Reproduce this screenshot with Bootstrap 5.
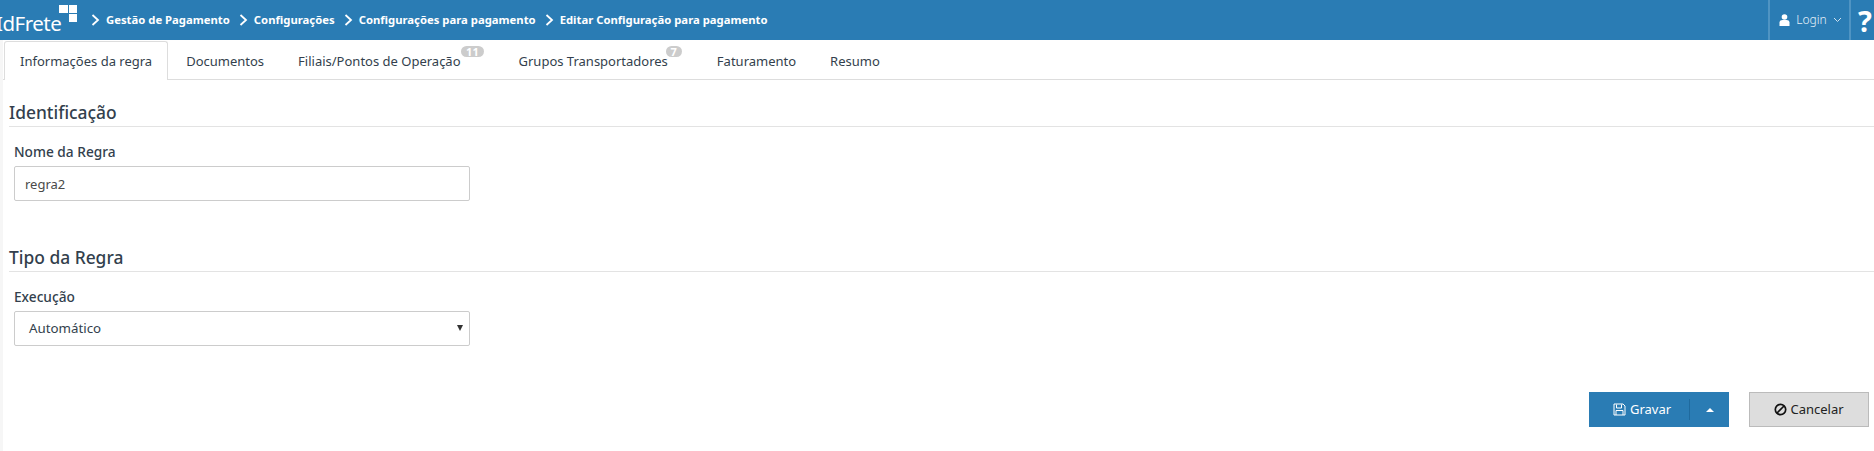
<!DOCTYPE html>
<html lang="pt-BR"><head><meta charset="utf-8"><title>Editar Configuração</title>
<link href="https://cdn.jsdelivr.net/npm/bootstrap@5.3.0/dist/css/bootstrap.min.css" rel="stylesheet">
<style>
html,body{height:451px;overflow:hidden;background:#fff}
body{font-family:"Noto Sans","Open Sans",sans-serif;font-size:13px;color:#333f4d}
.topbar{height:40px;background:#2a7cb4;color:#fff}
.brand{width:81px;height:40px;overflow:hidden;flex:none;position:relative}
.brand-word{font-size:20.5px;line-height:1;letter-spacing:-.5px;margin-left:-4px;margin-top:13px;white-space:nowrap}
.brand-mark{position:absolute;left:59px;top:5px}
.crumbs{font-size:11.3px;font-weight:700;padding-left:10px}
.crumbs svg{margin:0 6px 0 0}
.crumbs span{margin-right:9px}
.topcell{height:40px;border-left:2px solid #4f94c3}
.login{width:81px;font-size:12px;font-weight:300;color:#e6f1f9;padding-left:2px;gap:6px}
.helpcell{width:25px;font-size:29px;font-weight:700;line-height:1;padding-left:7px}
.workarea{border-left:3px solid #f6f6f6;height:411px}
.tabstrip{height:40px;padding:1px 0 0 1px;border-bottom:1px solid #ddd;flex-wrap:nowrap}
.tabstrip .nav-link{height:39px;padding:0 17px;color:#333f4d;font-size:13px;border:0;border-radius:3px 3px 0 0;position:relative;line-height:40px;white-space:nowrap}
.tabstrip .nav-link.active{border:1px solid #ddd;border-bottom:0;height:39px;background:#fff;line-height:39px;padding:0 15px;box-shadow:0 1px 0 #fff}
.tab-docs .nav-link{padding-left:18px}
.tab-fil .nav-link{padding-right:41px}
.tab-gru .nav-link{padding-right:32px}
.tab-count{position:absolute;top:5px;height:11px;padding:0 5px;border-radius:8px;background:#ccc;color:#fff;font-size:11px;line-height:11px;font-weight:700}
.tc1{left:180px}.tc2{left:164px}
.pane{padding:0 0 0 6px}
.sect{font-size:17.4px;font-weight:500;line-height:26px;margin:0;padding-bottom:1px;border-bottom:1px solid #e3e3e3;height:28px}
.sect1{margin-top:19px}.sect2{margin-top:43px}
.field{margin:16px 0 0 5px;width:456px}
.field .form-label{font-size:13.7px;font-weight:500;line-height:18px;margin-bottom:5px;display:block}
.field .form-control{height:35px;border:1px solid #ccc;border-radius:2px;font-size:13px;color:#4a4a4a;padding:0 10px}
.selectbox{height:35px;border:1px solid #ccc;border-radius:2px;padding:0 6px 0 14px;font-size:13.3px}
.caret{width:0;height:0;border:3.5px solid transparent;border-top:6px solid #333;border-bottom:0;margin-top:-2px}
.actions{position:absolute;top:392px;right:5px;gap:20px}
.btn-save{width:140px;height:35px;background:#2a7cb4;color:#fff;border:0;border-radius:0;font-size:13px;padding:0}
.save-main{width:100px;gap:4px;padding-left:6px}
.save-sep{width:1px;height:21px;background:#1f6a9e}
.btn-cancel{width:120px;height:35px;background:#ddd;border:1px solid #bbb;border-radius:0;color:#222;font-size:13px;padding:0;gap:3px}
.btn-save:hover{background:#2a7cb4;color:#fff}
</style></head><body>
<header class="topbar d-flex align-items-stretch">
  <div class="brand"><div class="brand-word">IdFrete</div>
    <svg class="brand-mark" width="18" height="17" viewBox="0 0 18 17"><rect x="0" y="0" width="9" height="8" fill="#fff"/><rect x="10" y="0" width="8" height="8" fill="#fff"/><rect x="10" y="9" width="8" height="8" fill="#fff"/></svg>
  </div>
  <nav class="crumbs d-flex align-items-center flex-grow-1">
    <svg width="9" height="12" viewBox="0 0 9 12"><path d="M1.5 1l5.5 5-5.5 5" fill="none" stroke="#fff" stroke-width="1.8"/></svg><span>Gestão de Pagamento</span>
    <svg width="9" height="12" viewBox="0 0 9 12"><path d="M1.5 1l5.5 5-5.5 5" fill="none" stroke="#fff" stroke-width="1.8"/></svg><span>Configurações</span>
    <svg width="9" height="12" viewBox="0 0 9 12"><path d="M1.5 1l5.5 5-5.5 5" fill="none" stroke="#fff" stroke-width="1.8"/></svg><span>Configurações para pagamento</span>
    <svg width="9" height="12" viewBox="0 0 9 12"><path d="M1.5 1l5.5 5-5.5 5" fill="none" stroke="#fff" stroke-width="1.8"/></svg><span>Editar Configuração para pagamento</span>
  </nav>
  <div class="topcell login d-flex align-items-center justify-content-center">
    <svg width="11" height="12" viewBox="0 0 11 12"><circle cx="5.5" cy="3" r="2.8" fill="#fff"/><path d="M.5 12V8.5C.5 6.8 2 6 3.5 6h4C9 6 10.5 6.8 10.5 8.5V12z" fill="#fff"/></svg>
    <span>Login</span>
    <svg width="9" height="6" viewBox="0 0 9 6"><path d="M1 1l3.5 3.5L8 1" fill="none" stroke="#cfe2f0"/></svg>
  </div>
  <div class="topcell helpcell d-flex align-items-center">?</div>
</header>
<div class="workarea">
<ul class="nav tabstrip">
  <li class="nav-item"><a class="nav-link active" href="#">Informações da regra</a></li>
  <li class="nav-item tab-docs"><a class="nav-link" href="#">Documentos</a></li>
  <li class="nav-item tab-fil"><a class="nav-link" href="#">Filiais/Pontos de Operação<span class="tab-count tc1">11</span></a></li>
  <li class="nav-item tab-gru"><a class="nav-link" href="#">Grupos Transportadores<span class="tab-count tc2">7</span></a></li>
  <li class="nav-item"><a class="nav-link" href="#">Faturamento</a></li>
  <li class="nav-item"><a class="nav-link" href="#">Resumo</a></li>
</ul>
<main class="pane">
  <h2 class="sect sect1">Identificação</h2>
  <div class="field"><label class="form-label" for="nome">Nome da Regra</label><input id="nome" class="form-control" value="regra2"></div>
  <h2 class="sect sect2">Tipo da Regra</h2>
  <div class="field"><span class="form-label">Execução</span>
    <div class="selectbox d-flex align-items-center justify-content-between"><span>Automático</span><span class="caret"></span></div></div>
</main>
</div>
<div class="actions d-flex">
  <div class="btn btn-save d-flex align-items-center">
    <span class="save-main d-flex align-items-center justify-content-center">
      <svg width="13" height="13" viewBox="0 0 13 13"><path d="M1 1h9l2 2v9H1zM3.5 1.5v3.5h5V1.5M3 12V7.5h7V12" fill="none" stroke="#fff"/></svg>Gravar</span>
    <span class="save-sep"></span>
    <svg class="ms-3" width="8" height="5" viewBox="0 0 8 5"><path d="M0 5l4-4 4 4z" fill="#fff"/></svg>
  </div>
  <button class="btn btn-cancel d-flex align-items-center justify-content-center">
    <svg width="13" height="13" viewBox="0 0 13 13"><circle cx="6.5" cy="6.5" r="5.2" fill="none" stroke="#111" stroke-width="1.7"/><path d="M3 10l7-7" stroke="#111" stroke-width="1.7"/></svg>Cancelar</button>
</div>
</body></html>
